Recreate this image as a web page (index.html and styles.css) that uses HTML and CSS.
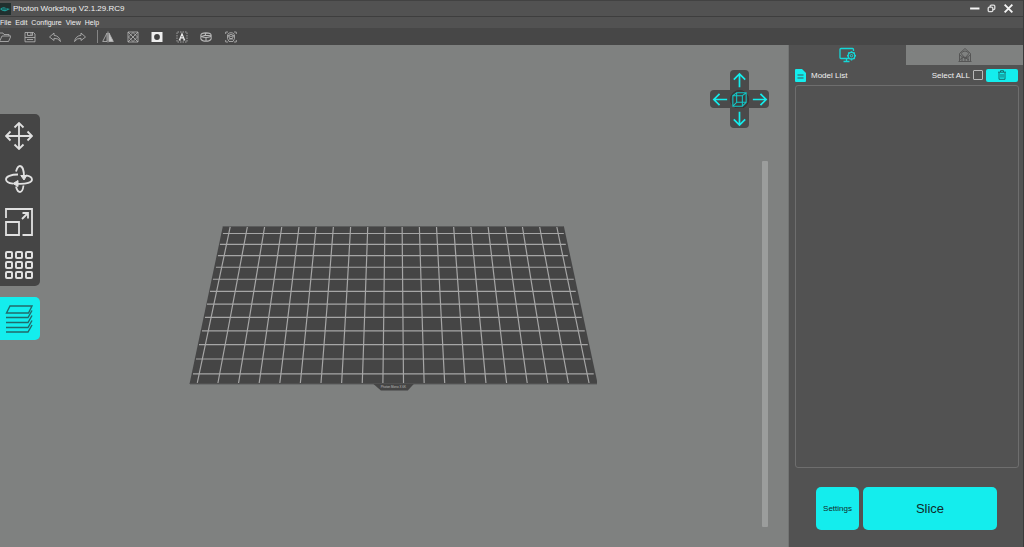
FILE: index.html
```html
<!DOCTYPE html>
<html lang="en">
<head>
<meta charset="utf-8">
<title>Photon Workshop V2.1.29.RC9</title>
<meta name="viewport" content="width=device-width, initial-scale=1">
<link rel="stylesheet" href="styles.css">
</head>
<body>
<div class="app">
  <header class="titlebar">
    <svg class="logo" viewBox="0 0 11 12"><path d="M0 0h11v12H0z" fill="#20302f"/><path d="M0 6q3-3 6-1l4 1-4 2q-3 1-6-2z" fill="#1f9a96"/><path d="M2 6h5" stroke="#173b3a"/></svg>
    <h1 class="title">Photon Workshop V2.1.29.RC9</h1>
    <div class="window-controls">
      <button class="win" aria-label="Minimize"><svg viewBox="0 0 10 10"><path d="M1 5h8.500" stroke="#f4f4f4" stroke-width="1.800"/></svg></button>
      <button class="win" aria-label="Restore"><svg viewBox="0 0 10 10"><rect x="3.800" y="2" width="4.200" height="4" rx="1" fill="none" stroke="#ddd" stroke-width="1.200"/><rect x="2" y="3.800" width="4.200" height="4" rx="1" fill="#525252" stroke="#ddd" stroke-width="1.200"/></svg></button>
      <button class="win" aria-label="Close"><svg viewBox="0 0 10 10"><path d="M1.500 1.500l7 7M8.500 1.500l-7 7" stroke="#f4f4f4" stroke-width="1.700"/></svg></button>
    </div>
  </header>
  <nav class="menubar">
    <button>File</button><button>Edit</button><button>Configure</button><button>View</button><button>Help</button>
  </nav>
  <div class="toolbar">
    <div class="file-tools">
      <button aria-label="Open"><svg viewBox="0 0 12 12"><path d="M.5 10.500V2h3.500l1 1.500h5V5M.5 10.500h9L12 5H3z"/></svg></button>
      <button aria-label="Save"><svg viewBox="0 0 12 12"><path d="M1 1.500h8.500L11 3v7.800H1zM3.500 1.500v3h5v-3M7 2v2M1 6.500h10M3 8.500h6"/></svg></button>
      <button aria-label="Undo"><svg viewBox="0 0 12 12"><path d="M5 2L.5 6 5 9.500V7.300q4-.3 6.500 3.200Q10.500 5 5 4.300z"/></svg></button>
      <button aria-label="Redo"><svg viewBox="0 0 12 12"><path d="M7 2l4.500 4L7 9.500V7.300Q3 7 .5 10.500 1.500 5 7 4.300z"/></svg></button>
    </div>
    <span class="separator"></span>
    <div class="model-tools">
      <button aria-label="Mirror"><svg viewBox="0 0 12 12"><path d="M6 .5v11M5 2v8.500H.7z"/><path d="M7 2v8.500h4.300z" fill="#c4c4c4"/></svg></button>
      <button aria-label="Hollow"><svg viewBox="0 0 12 12"><path d="M1 1h10v10H1zM1 1l10 10M11 1L1 11"/><path d="M6 1.500L10.500 6 6 10.500 1.500 6z"/></svg></button>
      <button aria-label="Punch"><svg viewBox="0 0 12 12"><path d="M.5 1h11v10H.5z" fill="#eee" stroke="none"/><circle cx="6" cy="6" r="2.900" fill="#414141" stroke="none"/></svg></button>
      <button aria-label="Text"><svg viewBox="0 0 12 12"><path d="M1 3V1h2M9 1h2v2M11 9v2H9M3 11H1V9M1 4v4M11 4v4M4 1h4M4 11h4" stroke-dasharray="1.500 1"/><path d="M3.500 9L6 2.800 8.500 9M4.500 6.900h3M2.800 9h2M7.200 9h2" stroke="#eee" stroke-width="1.200"/></svg></button>
      <button aria-label="Split"><svg viewBox="0 0 14 12"><path d="M1 4q0-2.600 6-2.800 6 .2 6 2.800 0 2.300-6 2.500Q1 6.300 1 4v4.200Q2.500 11 7 11t6-2.800V4M7 1.200L6 4l7 .5M6 4L2 5.500M7 6.500V11" stroke-width="1.200"/></svg></button>
      <button aria-label="Support detection"><svg viewBox="0 0 12 12"><path d="M.7 3V1H3M9 1h2.300v2M.7 9v2H3M11.300 9v2H9M3 5q-1-3 3-3.300Q10 2 9 5M2.500 4.500l3.500 1 3.500-1v3L8 10.500H4L2.500 7.500zM4 8h4"/><circle cx="6" cy="5.500" r="2.200"/></svg></button>
    </div>
  </div>

  <div class="workspace">
    <main class="viewport">
      <svg class="plate" viewBox="188 226 410 166" role="img" aria-label="Build plate">
        <path d="M222 226H564L598 384.500H188.500z" fill="#454545"/>
        <path d="M222 226.500H564M189 384.500H598" stroke="#5c5d5d"/>
        <path d="M373 384.500h40.500l-6 6.500h-27z" fill="#454545"/>
        <g class="grid-lines">
          <path d="M229.300 227L196.300 383.500M246.500 227L217 383.500M263.800 227L237.700 383.500M281 227L258.400 383.500M298.300 227L279.100 383.500M315.500 227L299.700 383.500M332.800 227L320.400 383.500M350.100 227L341.100 383.500M367.300 227L361.800 383.500M384.500 227L382.500 383.500M401.800 227L403.200 383.500M419.100 227L423.900 383.500M436.300 227L444.500 383.500M453.500 227L465.200 383.500M470.800 227L485.900 383.500M488.100 227L506.600 383.500M505.300 227L527.300 383.500M522.500 227L547.900 383.500M539.800 227L568.600 383.500M557 227L589.300 383.500"/>
          <path d="M222 233.500H564M219 244.500H566M217 255.700H568M215 267.400H571M212 279.400H574M209 291.600H576M206 304.300H579M204 317.600H582M201 331.200H585M198 345.100H588M195 359.400H591M192 374.300H594"/>
        </g>
        <text class="plate-name" x="393" y="389">Photon Mono X 6K</text>
      </svg>

      <div class="tools">
        <div class="tool-group">
          <button aria-label="Move"><svg viewBox="0 0 28 28"><path d="M14 1v26M1 14h26M9.500 5.500L14 1l4.500 4.500M9.500 22.500L14 27l4.500-4.500M5.500 9.500L1 14l4.500 4.500M22.500 9.500L27 14l-4.500 4.500"/></svg></button>
          <button aria-label="Rotate"><svg viewBox="0 0 28 28"><path d="M13 9.500C6 9.500 1 11.500 1 14.300c0 2.300 3 4 7 4.400M21 10.300c4 .7 6 2.200 6 4.200 0 3-5 4.800-15 4.300M11 6.500C12 3 13.500 1 15 1c2.500 0 4 5 4 11M11 21.500c.8 3.500 2 5.500 4 5.500 1.800 0 3-2.500 3.500-6.500"/><path d="M8 18.500l5-3v6zM15.800 10.500h6L19 15z" fill="#e0e0e0" stroke-width="1"/></svg></button>
          <button aria-label="Scale"><svg viewBox="0 0 28 28"><path d="M1 10V1h26v26H17.500M1 14h13v13H1zM17 11l6-6M17.500 5H23v5.500"/></svg></button>
          <button aria-label="Arrange"><svg viewBox="0 0 28 28"><g stroke-width="2"><rect x="1" y="1" width="6" height="6" rx="1"/><rect x="11" y="1" width="6" height="6" rx="1"/><rect x="21" y="1" width="6" height="6" rx="1"/><rect x="1" y="11" width="6" height="6" rx="1"/><rect x="11" y="11" width="6" height="6" rx="1"/><rect x="21" y="11" width="6" height="6" rx="1"/><rect x="1" y="21" width="6" height="6" rx="1"/><rect x="11" y="21" width="6" height="6" rx="1"/><rect x="21" y="21" width="6" height="6" rx="1"/></g></svg></button>
        </div>
        <button class="layers" aria-label="Layers"><svg viewBox="0 0 28 28"><path d="M5 1h22l-3.500 7H1.500zM1 12.500h22L27 5.500M1 17.500h22l4-7M1 22.500h22l4-7M1 27h22l4-7"/></svg></button>
      </div>

      <div class="pad">
        <button class="up" aria-label="Rotate up"><svg viewBox="0 0 20 20"><path d="M10 17V3M4 9l6-6 6 6"/></svg></button>
        <button class="left" aria-label="Rotate left"><svg viewBox="0 0 20 20"><path d="M17 10H3M9 4l-6 6 6 6"/></svg></button>
        <button class="home" aria-label="Home view"><svg viewBox="0 0 20 20"><circle class="cube-disc" cx="10" cy="10" r="9.500"/><path class="cube" d="M3 6h10v11H3zM7 3h10v10H7zM3 6l4-3M13 6l4-3M13 17l4-4M3 17l4-4"/></svg></button>
        <button class="right" aria-label="Rotate right"><svg viewBox="0 0 20 20"><path d="M3 10h14M11 4l6 6-6 6"/></svg></button>
        <button class="down" aria-label="Rotate down"><svg viewBox="0 0 20 20"><path d="M10 3v14M4 11l6 6 6-6"/></svg></button>
      </div>
      <input class="layer-slider" type="range" aria-label="Layer height">
    </main>

    <aside class="panel">
      <div class="tabs">
        <button class="tab active" aria-label="Slice settings"><svg viewBox="0 0 18 16"><path d="M9 11.500H2q-1 0-1-1V2.500q0-1 1-1h11.500q1 0 1 1V4M4.500 14.500h6M7.500 11.500v3" stroke-width="1.300"/><circle cx="12.500" cy="8.700" r="3.300" stroke-width="1.300"/><circle cx="12.500" cy="8.700" r="1.200"/><path d="M12.500 4.200v1M12.500 12.200v1.200M8 8.700h1.200M15.800 8.700H17M9.300 5.500l.9.900M15.700 5.500l-.9.900M9.300 11.900l.9-.9M15.700 11.900l-.9-.9" stroke-width="1.500"/></svg></button>
        <button class="tab" aria-label="Supports"><svg viewBox="0 0 18 16"><path d="M3.500 14.500V6.500L9 1.500l5.500 5v8zM5 6.500q4-5 8 0L9 11zM3.500 8L9 11.500 14.500 8M6 10v4.500M9 11v3.500M12 10v4.500M2.500 14.500h13M4 12.500l4-2.500 5 3"/></svg></button>
      </div>
      <div class="list-head">
        <svg class="doc" viewBox="0 0 11 13"><path d="M1 0h6l4 4v8q0 1-1 1H1q-1 0-1-1V1q0-1 1-1z" fill="#14eded"/><path d="M2.500 6h6M2.500 9h6" stroke="#375a5a" stroke-width="1.200"/></svg>
        <h2 class="list-title">Model List</h2>
        <label class="select-all" for="select-all">Select ALL</label>
        <input class="check" type="checkbox" id="select-all">
        <button class="trash" aria-label="Delete"><svg viewBox="0 0 10 10"><path d="M1 2.200h8M3.500 2V.7h3V2M2 2.500v6.800h6V2.500M4 4v3.700M6 4v3.700"/></svg></button>
      </div>
      <div class="model-list"></div>
      <div class="actions">
        <button class="settings">Settings</button>
        <button class="slice">Slice</button>
      </div>
    </aside>
  </div>
</div>
</body>
</html>
```

FILE: styles.css
```css
* { box-sizing: border-box; }

body {
  margin: 0;
  font-family: "Liberation Sans", Arial, sans-serif;
  font-size: 8px;
  color: #f0f0f0;
  background: #525252;
}

button {
  display: flex;
  align-items: center;
  justify-content: center;
  margin: 0;
  padding: 0;
  border: 0;
  background: none;
  color: inherit;
  font: inherit;
}

svg { display: block; }

.app {
  display: flex;
  flex-direction: column;
  height: 100vh;
  border-right: 1px solid #3a3a3a;
}

.titlebar {
  display: flex;
  align-items: center;
  height: 17px;
  border-top: 1px solid #424242;
  border-bottom: 1px solid #3e3e3e;
  background: #525252;
}

.logo { width: 11px; height: 12px; }

.title {
  margin: 0 auto 0 2px;
  font-size: 8px;
  font-weight: normal;
}

.window-controls { display: flex; gap: 6px; padding-right: 9px; }
.win, .win svg { width: 11px; height: 11px; }

.menubar {
  display: flex;
  gap: 4px;
  height: 11px;
  font-size: 7px;
  background: #525252;
}

.toolbar {
  display: flex;
  align-items: center;
  height: 17px;
  background: #474747;
}

.file-tools, .model-tools { display: flex; justify-content: space-between; }
.file-tools { width: 87px; margin-left: -1px; }
.model-tools { width: 135px; }

.toolbar svg {
  width: 12px;
  height: 12px;
  fill: none;
  stroke: #b8b8b8;
  stroke-width: 0.8;
}

.separator { width: 1px; height: 13px; margin: 0 4px 0 11px; background: #858585; }

.workspace { display: flex; flex: 1; min-height: 0; }

.viewport {
  position: relative;
  display: flex;
  flex: 1;
  align-items: center;
  justify-content: center;
  padding: 26px 2px 0 0;
  border-right: 1px solid #727473;
  background: #7f8180;
}

.plate { width: 52%; }
.grid-lines { fill: none; stroke: #a6a6a6; stroke-width: 1.2; }
.plate-name { font-size: 3px; text-anchor: middle; fill: #bdbdbd; }

.tools {
  position: absolute;
  top: 69px;
  left: 0;
  display: grid;
  gap: 11px;
  width: 40px;
}

.tool-group { border-radius: 0 5px 5px 0; background: #454545; }

.tools button { width: 100%; height: 43px; padding-right: 2px; }

.tools svg {
  width: 28px;
  height: 28px;
  fill: none;
  stroke: #e0e0e0;
  stroke-width: 1.8;
}

.tools .layers { border-radius: 0 5px 5px 0; background: #14eded; }
.tools .layers svg { stroke: #226a6a; stroke-width: 1.4; }

.pad {
  position: absolute;
  top: 25px;
  right: 19px;
  display: grid;
  grid-template: "a up b" 20px "left home right" 18px "c down d" 20px / 20px 19px 20px;
}

.pad button { background: #4a4a4a; }
.up { grid-area: up; border-radius: 4px 4px 0 0; }
.left { grid-area: left; border-radius: 4px 0 0 4px; }
.home { grid-area: home; }
.right { grid-area: right; border-radius: 0 4px 4px 0; }
.down { grid-area: down; border-radius: 0 0 4px 4px; }
.pad svg { width: 19px; height: 19px; fill: none; stroke: #14eded; stroke-width: 1.8; }
.pad .cube-disc { fill: #3e3e3e; stroke: #353535; stroke-width: 1; }
.pad .cube { stroke: #12c8c8; stroke-width: 1.1; }

.layer-slider {
  position: absolute;
  top: 116px;
  right: 20px;
  bottom: 20px;
  width: 6px;
  height: auto;
  margin: 0;
  border-radius: 1px;
  background: #9b9d9c;
  writing-mode: vertical-lr;
  appearance: none;
}

.layer-slider::-webkit-slider-thumb { width: 6px; height: 1px; appearance: none; background: transparent; }

.panel {
  display: flex;
  flex-direction: column;
  width: 234px;
  background: #525252;
}

.tabs { display: grid; grid-template-columns: 1fr 1fr; height: 20px; }
.tab { background: #7f8180; }
.tab svg { width: 18px; height: 16px; fill: none; stroke: #555; stroke-width: 1; }
.tab.active { background: #525252; }
.tab.active svg { stroke: #14d8d8; }

.list-head { display: flex; align-items: center; height: 20px; padding: 0 5px 0 6px; }
.doc { width: 11px; height: 13px; }
.list-title { margin: 0 auto 0 5px; font-size: 8px; font-weight: normal; }

.check {
  width: 10px;
  height: 10px;
  margin: 0 3px;
  border: 1px solid #b8b8b8;
  border-radius: 1px;
  appearance: none;
}

.trash { width: 32px; height: 13px; border-radius: 2px; background: #14eded; }
.trash svg { width: 10px; height: 10px; fill: none; stroke: #176c6c; stroke-width: 1; }

.model-list { flex: 1; margin: 0 4px 0 6px; border: 1px solid #6e6e6e; border-radius: 3px; }

.actions { display: flex; gap: 4px; height: 79px; padding: 19px 26px 17px 27px; }
.actions button { border-radius: 5px; background: #14eded; color: #102a2a; }
.actions .settings { width: 43px; }
.actions .slice { flex: 1; font-size: 13px; }
```
